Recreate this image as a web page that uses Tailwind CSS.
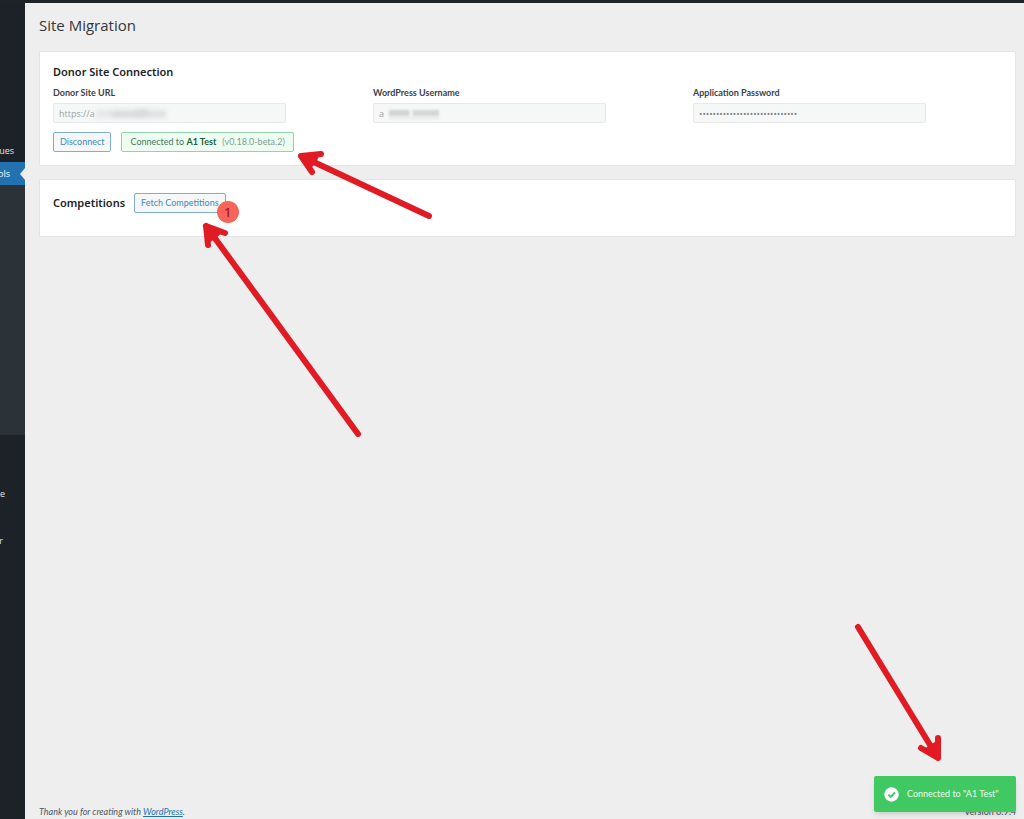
<!DOCTYPE html>
<html lang="en">
<head>
    <meta charset="UTF-8">
    <meta name="viewport" content="width=device-width, initial-scale=1.0">
    <title>Site Migration</title>
    <script src="https://cdn.jsdelivr.net/npm/@tailwindcss/browser@4"></script>
</head>
<body class="relative flex min-h-screen flex-col overflow-x-hidden bg-[#eeeeee] font-['Lato','Noto_Sans',sans-serif] text-[9px] leading-3 text-[#3c434a]">

    <!-- Admin bar -->
    <div class="h-[3px] bg-[#1d2327]"></div>

    <div class="flex grow">
        <!-- Admin menu -->
        <nav class="flex w-[25px] shrink-0 flex-col overflow-hidden bg-[#1d2229] pt-[136px] font-['Open_Sans',sans-serif] text-[9px] text-[#e0e3e6]" aria-label="Admin menu">
            <a href="#" class="flex h-[23px] items-center justify-end pr-[11px]">ues</a>
            <a href="#" class="relative flex h-[23px] items-center justify-end bg-[#2271b1] pr-[15px] text-white" aria-current="page">ols
                <span class="absolute top-[6px] right-0 border-y-[6px] border-r-[5px] border-y-transparent border-r-[#eeeeee]"></span>
            </a>
            <div class="h-[250px] bg-[#2c3338]"></div>
            <a href="#" class="mt-[47px] flex h-[23px] items-center justify-end pr-5">e</a>
            <a href="#" class="mt-6 flex h-[23px] items-center justify-end pr-[22px]">r</a>
        </nav>

        <main class="flex grow flex-col pr-2 pl-[14px]">
            <h1 class="pt-[10px] font-['Open_Sans',sans-serif] text-[15px] leading-6 font-normal text-[#32373c]">Site Migration</h1>

            <!-- Donor connection -->
            <section class="relative mt-[14px] rounded-xs border border-[#e2e4e7] bg-white px-[13px] pt-3 pb-[13px]">
                <h2 class="font-['Noto_Sans',sans-serif] text-[11px] leading-4 font-semibold text-[#1d2327]">Donor Site Connection</h2>
                <div class="mt-[7px] grid grid-cols-3 gap-x-[11px]">
                    <div>
                        <label for="siteUrl" class="block font-bold">Donor Site URL</label>
                        <div class="relative mt-1">
                            <input id="siteUrl" type="text" value="https://a" disabled class="block h-5 w-full max-w-[233px] rounded-xs border border-[#e6e8ea] bg-[#f6f7f7] px-[5px] font-['Open_Sans',sans-serif] text-[#a0a2a5]">
                            <span class="absolute top-[6px] left-[43px] flex h-[9px] w-[70px] items-end blur-[2px]">
                                <i class="h-2 w-4 bg-[#e6e7e8]"></i><i class="h-2 w-6 bg-[#dadcdd]"></i><i class="h-[9px] w-3 bg-[#d8dadb]"></i><i class="h-2 w-[18px] bg-[#dfe1e2]"></i>
                            </span>
                        </div>
                    </div>
                    <div>
                        <label for="username" class="block font-bold">WordPress Username</label>
                        <div class="relative mt-1">
                            <input id="username" type="text" value="a" disabled class="block h-5 w-full max-w-[233px] rounded-xs border border-[#e6e8ea] bg-[#f6f7f7] px-[5px] font-['Open_Sans',sans-serif] text-[#a0a2a5]">
                            <span class="absolute top-[7px] left-4 flex h-[9px] w-[50px] items-start border-b-2 border-[#e6e8e8] blur-[1px]">
                                <i class="h-[6px] w-5 bg-[#d2d4d4]"></i><i class="h-[6px] w-1 bg-[#f0f1f1]"></i><i class="h-[6px] w-[26px] bg-[#d5d7d7]"></i>
                            </span>
                        </div>
                    </div>
                    <div>
                        <label for="appPassword" class="block font-bold">Application Password</label>
                        <div class="mt-1">
                            <input id="appPassword" type="password" value="abcd efgh ijkl mnop qrst uvwx" disabled class="block h-5 w-full max-w-[233px] rounded-xs border border-[#e6e8ea] bg-[#f6f7f7] px-[5px] font-['Open_Sans',sans-serif] text-[#7d8083]">
                        </div>
                    </div>
                </div>
                <div class="mt-[9px] flex gap-[10px]">
                    <button type="button" class="h-5 rounded-xs border border-[#7fadd3] bg-[#f6f7f7] px-[6px] text-[#4288bf]">Disconnect</button>
                    <p class="flex h-5 items-center rounded-xs border border-[#93d3aa] bg-[#edfdf1] px-2 text-[#44795a]">Connected to&nbsp;<strong class="font-bold text-[#1b6238]">A1 Test</strong><span class="ml-[6px] text-[#829f8e]">(v0.18.0-beta.2)</span></p>
                </div>
                <svg class="pointer-events-none absolute top-[96px] left-[256px] z-10 h-[74px] w-[142px]" viewBox="296 148 142 74" fill="none" stroke="#e01b24" stroke-width="6" stroke-linecap="round" stroke-linejoin="round" aria-hidden="true">
                    <path d="M429 216L301 156M321 154L301 156L312 172" />
                    <path d="M303 157L319 156L316 163L310 169Z" fill="#e01b24" stroke="none" />
                </svg>
            </section>

            <!-- Competitions -->
            <section class="relative mt-[13px] rounded-xs border border-[#e2e4e7] bg-white px-[13px] pt-[13px] pb-[23px]">
                <div class="flex items-center gap-[9px]">
                    <h2 class="font-['Noto_Sans',sans-serif] text-[11px] leading-4 font-semibold text-[#1d2327]">Competitions</h2>
                    <div class="relative">
                        <button type="button" class="block h-5 rounded-xs border border-[#7fadd3] bg-[#f6f7f7] px-[6px] text-[#4288bf]">Fetch Competitions</button>
                        <span class="absolute top-2 -right-[13px] flex size-[22px] items-center justify-center rounded-full bg-[#f6655a] font-['Noto_Sans',sans-serif] text-[13px] font-medium text-[#a5122e]">1</span>
                    </div>
                </div>
                <svg class="pointer-events-none absolute top-[39px] left-[160px] z-10 h-[222px] w-[164px]" viewBox="200 219 164 222" fill="none" stroke="#e01b24" stroke-width="6" stroke-linecap="round" stroke-linejoin="round" aria-hidden="true">
                    <path d="M358 434L206 226M225 233L206 226L208 245" />
                    <path d="M207 227L222 233L216 238L209 243Z" fill="#e01b24" stroke="none" />
                </svg>
            </section>

            <footer class="mt-auto flex justify-between pb-px text-[#50575e]">
                <p class="italic">Thank you for creating with <a href="https://wordpress.org/" class="text-[#2271b1] underline">WordPress</a>.</p>
                <p>Version 6.9.4</p>
            </footer>
        </main>
    </div>

    <!-- Toast -->
    <div role="status" class="absolute right-2 bottom-[7px] flex h-9 w-[142px] items-center gap-2 rounded-xs bg-[#40c962] pl-[10px] text-[#eafbee] shadow-md">
        <svg class="size-[15px] shrink-0" viewBox="0 0 15 15" fill="none" aria-hidden="true">
            <circle cx="7.5" cy="7.5" r="7.2" fill="#fff" />
            <path d="M4.3 7.6L6.7 9.9L10.9 5.5" stroke="#40c962" stroke-width="2" />
        </svg>
        <span class="whitespace-nowrap">Connected to "A1 Test"</span>
        <svg class="pointer-events-none absolute right-[70px] bottom-[46px] h-[146px] w-[94px]" viewBox="852 620 94 146" fill="none" stroke="#e01b24" stroke-width="6" stroke-linecap="round" stroke-linejoin="round" aria-hidden="true">
            <path d="M858 627L938 758M938 738L938 758L921 748" />
            <path d="M938 757L924 749L930 745L938 740Z" fill="#e01b24" stroke="none" />
        </svg>
    </div>

</body>
</html>
